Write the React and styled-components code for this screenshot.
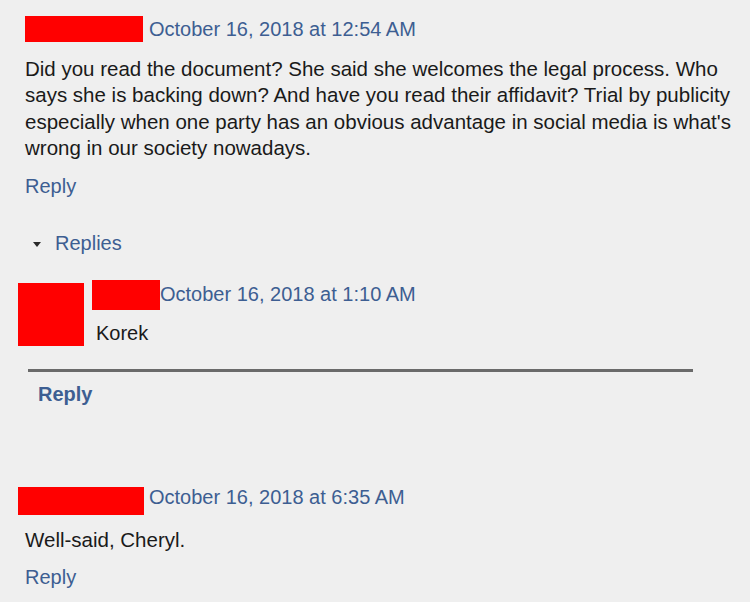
import React from 'react';
import styled, { createGlobalStyle } from 'styled-components';

const GlobalStyle = createGlobalStyle`
	html, body {
		margin: 0;
		padding: 0;
		background: #efefef;
	}
	body {
		font-family: 'Liberation Sans', Arial, sans-serif;
		color: #1a1a1a;
	}
`;

const Page = styled.div`
	width: 750px;
	height: 602px;
	overflow: hidden;
	background: #efefef;
	padding: 16px 0 0 0;
	box-sizing: border-box;
`;

const Comment = styled.div`
	padding-left: ${(p) => p.$indent || 25}px;
	margin-top: ${(p) => p.$mt || 0}px;
`;

const Header = styled.div`
	display: flex;
	align-items: flex-start;
	height: 28px;
`;

const Redact = styled.div`
	background: #ff0000;
	width: ${(p) => p.$w}px;
	height: ${(p) => p.$h}px;
	margin-top: ${(p) => p.$mt || 0}px;
	flex-shrink: 0;
`;

const DateLink = styled.a`
	color: #3d5e92;
	font-size: 20px;
	line-height: 26px;
	margin-left: ${(p) => p.$ml ?? 6}px;
	margin-top: ${(p) => p.$mt || 0}px;
	text-decoration: none;
`;

const Body = styled.p`
	margin: ${(p) => p.$mt ?? 12}px 0 0 ${(p) => p.$ml || 0}px;
	font-size: 20.5px;
	line-height: 26.3px;
	width: 712px;
`;

const ReplyLink = styled.a`
	display: block;
	color: #3d5e92;
	font-size: 20px;
	font-weight: ${(p) => (p.$bold ? 700 : 400)};
	text-decoration: none;
	margin-top: ${(p) => p.$mt || 0}px;
	margin-left: ${(p) => p.$ml || 0}px;
`;

const Toggle = styled.div`
	display: flex;
	align-items: center;
	gap: 14px;
	margin: 34px 0 0 33px;
	color: #3d5e92;
	font-size: 20px;
`;

const Caret = styled.span`
	width: 0;
	height: 0;
	border-left: 4.5px solid transparent;
	border-right: 4.5px solid transparent;
	border-top: 5px solid #2a2a2a;
	margin-top: 1px;
`;

const ReplyItem = styled.div`
	display: flex;
	align-items: flex-start;
	gap: 8px;
	margin: 25px 0 0 18px;
`;

const ReplyContent = styled.div`
	display: flex;
	flex-direction: column;
`;

const ReplyHeader = styled.div`
	display: flex;
	align-items: flex-start;
`;

const ReplyText = styled.div`
	font-size: 20px;
	margin: 12px 0 0 4px;
`;

const Divider = styled.hr`
	border: none;
	height: 3px;
	background: #6a6a6a;
	width: 665px;
	margin: 23px 0 0 28px;
`;

const App = () => {
	return (
		<>
			<GlobalStyle />
			<Page>
				<Comment>
					<Header>
						<Redact $w={118} $h={26} />
						<DateLink href="#">October 16, 2018 at 12:54 AM</DateLink>
					</Header>
					<Body>
						Did you read the document? She said she welcomes the legal process. Who
						says she is backing down? And have you read their affidavit? Trial by
						publicity especially when one party has an obvious advantage in social
						media is what's wrong in our society nowadays.
					</Body>
					<ReplyLink href="#" $mt={14}>
						Reply
					</ReplyLink>
				</Comment>

				<Toggle>
					<Caret />
					<span>Replies</span>
				</Toggle>

				<ReplyItem>
					<Redact $w={66} $h={63} $mt={3} />
					<ReplyContent>
						<ReplyHeader>
							<Redact $w={68} $h={30} />
							<DateLink href="#" $ml={0} $mt={1}>
								October 16, 2018 at 1:10 AM
							</DateLink>
						</ReplyHeader>
						<ReplyText>Korek</ReplyText>
					</ReplyContent>
				</ReplyItem>

				<Divider />
				<ReplyLink href="#" $bold $ml={38} $mt={11}>
					Reply
				</ReplyLink>

				<Comment $indent={18} $mt={81}>
					<Header>
						<Redact $w={126} $h={28} />
						<DateLink href="#" $ml={5} $mt={-3}>
							October 16, 2018 at 6:35 AM
						</DateLink>
					</Header>
					<Body $mt={12} $ml={7}>
						Well-said, Cheryl.
					</Body>
					<ReplyLink href="#" $mt={13} $ml={7}>
						Reply
					</ReplyLink>
				</Comment>
			</Page>
		</>
	);
};

export default App;
